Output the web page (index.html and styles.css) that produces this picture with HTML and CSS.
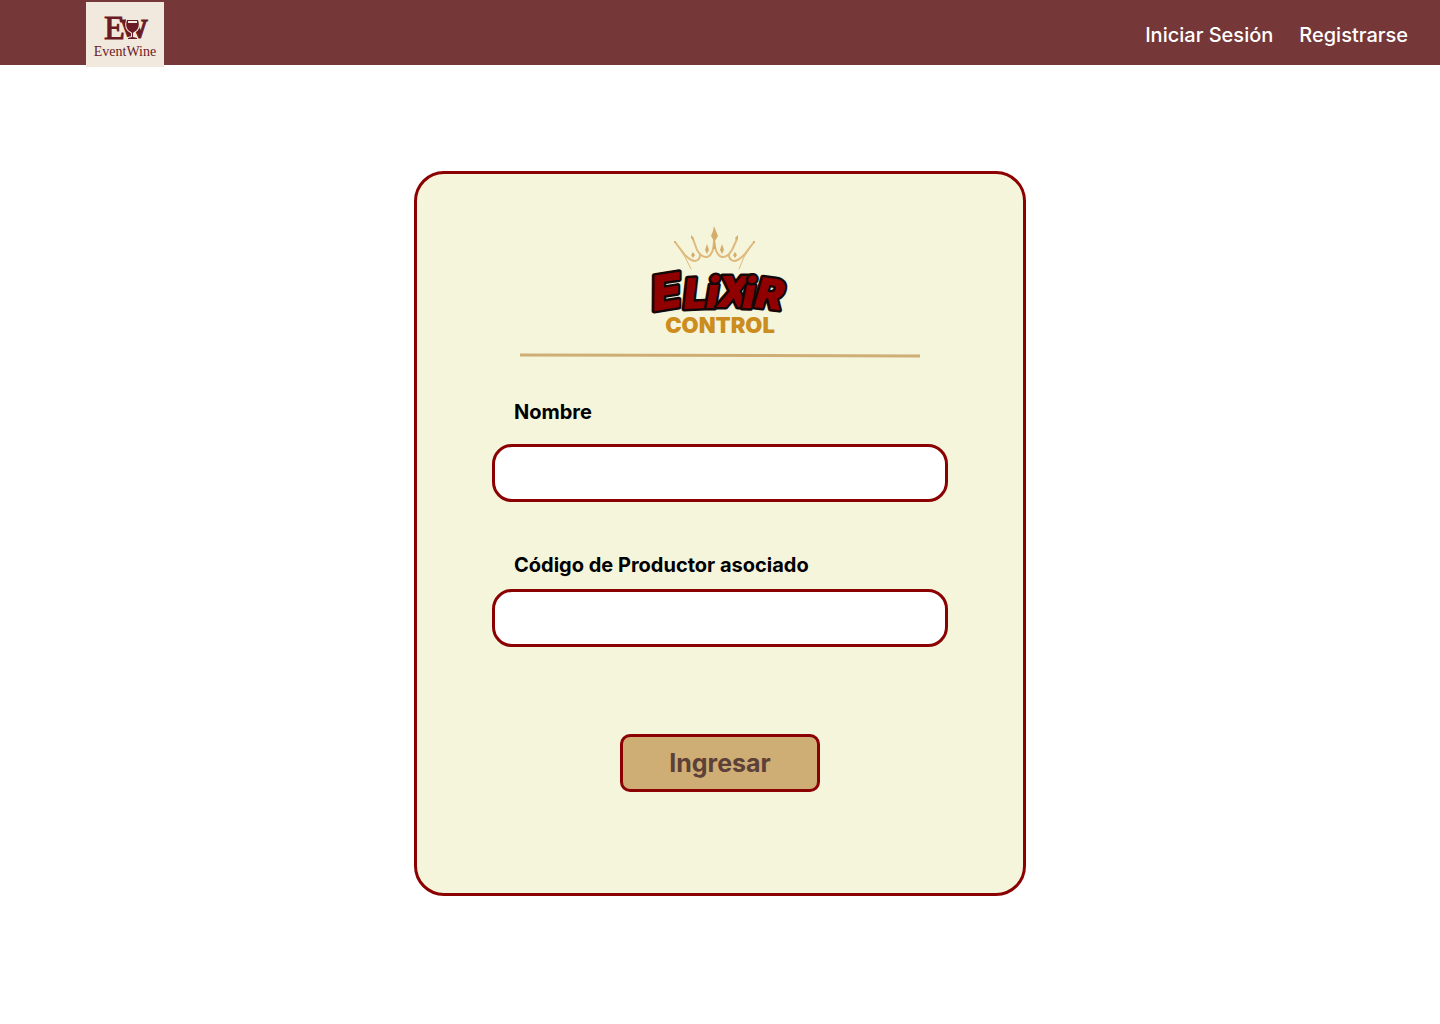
FILE: index.html
```html
<!DOCTYPE html>
<html lang="es">
<head>
<meta charset="utf-8">
<meta name="viewport" content="width=device-width, initial-scale=1">
<title>EventWine</title>
<link rel="stylesheet" href="styles.css">
</head>
<body>
<header class="topbar">
  <a class="brand" href="#" aria-label="EventWine">
    <svg class="brand-logo" viewBox="0 0 78 65">
      <rect width="78" height="65" fill="#f1e8de"/>
      <text class="brand-e" x="18" y="37">E</text>
      <text class="brand-w" x="34" y="36">W</text>
      <path class="brand-glass" d="M41 18h11c2 6 0 10-4 12l-1 1v4l4 1v1h-9v-1l4-1v-4l-1-1c-4-2-6-6-4-12z"/>
      <path d="M42 19h9v2h-9z" fill="#f1e8de"/>
      <text class="brand-name" x="39" y="54">EventWine</text>
    </svg>
  </a>
  <nav class="nav">
    <a href="#">Iniciar Sesión</a>
    <a href="#">Registrarse</a>
  </nav>
</header>
<main class="page">
  <form class="card">
    <svg class="logo" viewBox="0 0 138 110" role="img" aria-label="Elixir Control">
      <g fill="none" stroke="#dfba7c" stroke-linecap="round" stroke-linejoin="round">
        <path d="M24 17l10 13q6 6 10 6 5-1 5-6M103 17L93 30q-6 6-10 6-5-1-5-6" stroke-width="2"/>
        <path d="M42 14l4 11q5 8 10 7 7-2 7-17 1 15 8 17 5 1 10-7l5-11" stroke-width="2"/>
        <path d="M26 20l8 12 6 12M101 20l-8 12-5 12" stroke-width="1"/>
      </g>
      <g fill="#d5ad6b">
        <path d="M63 1l2 5 2 5-3 5 1 8h-3l1-8-3-5 2-5z"/>
        <path d="M56 19l2 6-2 4-2-4zM71 19l2 6-2 4-2-4zM42 27l2 3-2 3-2-3zM84 27l2 3-2 3-2-3z"/>
        <path d="M40 10l3 3-1 2-2-2zM87 10l-3 3 1 2 2-2z"/>
        <circle cx="24" cy="17" r="1"/><circle cx="103" cy="17" r="1"/>
      </g>
      <text class="logo-elixir" x="3 33 55 66 91 103" y="86 84 83 82 83 82" rotate="-9 -3 0 0 2 7"><tspan class="logo-initial">E</tspan>LiXiR</text>
      <text class="logo-control" x="69" y="108">CONTROL</text>
    </svg>
    <svg class="rule" viewBox="0 0 400 4" preserveAspectRatio="none" aria-hidden="true">
      <path d="M0 2L400 3" stroke="#cfae75" stroke-width="3"/>
    </svg>
    <div class="field field-name">
      <label for="nombre">Nombre</label>
      <input id="nombre" type="text">
    </div>
    <div class="field field-code">
      <label for="codigo">Código de Productor asociado</label>
      <input id="codigo" type="text">
    </div>
    <button class="submit" type="submit">Ingresar</button>
  </form>
</main>
</body>
</html>
```
FILE: styles.css
```css
* { box-sizing: border-box; }

body {
  margin: 0;
  background: #fff;
  color: #000;
  font-family: Inter, sans-serif;
}

.topbar {
  display: flex;
  justify-content: space-between;
  align-items: flex-start;
  height: 65px;
  padding: 2px 32px 0 86px;
  background: #753737;
}

.brand-logo { display: block; width: 78px; height: 65px; fill: #6b1a24; }
.brand-e { font: 34px "Liberation Serif", serif; stroke: #6b1a24; stroke-width: 1; }
.brand-w { font: bold 28px "Liberation Serif", serif; stroke: #6b1a24; stroke-width: 1; }
.brand-glass { stroke: #f1e8de; stroke-width: 2; paint-order: stroke; }
.brand-name { font: 14px "Liberation Serif", serif; text-anchor: middle; }

.nav { display: flex; gap: 26px; padding-top: 21px; }
.nav a {
  color: #fff;
  font-size: 20px;
  font-weight: 500;
  line-height: 24px;
  text-decoration: none;
}

.page { display: flex; justify-content: center; padding: 106px 16px; }

.card {
  display: flex;
  flex-direction: column;
  align-items: center;
  width: 100%;
  max-width: 612px;
  padding: 51px 32px 101px;
  border: 3px solid #8b0000;
  border-radius: 30px;
  background: #f5f5dc;
}

.logo { width: 138px; height: 110px; overflow: visible; }
.logo-elixir {
  font: italic 900 42px Inter, sans-serif;
  fill: #900000;
  stroke: #140808;
  stroke-width: 5;
  stroke-linejoin: round;
  paint-order: stroke;
}
.logo-initial { font-size: 48px; }
.logo-control {
  font: 900 22px Inter, sans-serif;
  fill: #cc8d20;
  text-anchor: middle;
}

.rule { width: 100%; max-width: 400px; height: 4px; margin-top: 18px; overflow: visible; }

.field { display: flex; flex-direction: column; width: 100%; max-width: 456px; }
.field label {
  padding-left: 22px;
  font-size: 20px;
  font-weight: 700;
  line-height: 24px;
}
.field input {
  width: 100%;
  height: 58px;
  padding: 0 20px;
  border: 3px solid #8b0000;
  border-radius: 20px;
  background: #fff;
  font: 20px Inter, sans-serif;
}
.field-name { gap: 20px; margin-top: 43px; }
.field-code { gap: 12px; margin-top: 51px; }

.submit {
  width: 200px;
  height: 58px;
  margin-top: 87px;
  padding: 0;
  border: 3px solid #8b0000;
  border-radius: 10px;
  background: #cfae75;
  color: #5d4037;
  font: 700 25px/30px Inter, sans-serif;
}
```
